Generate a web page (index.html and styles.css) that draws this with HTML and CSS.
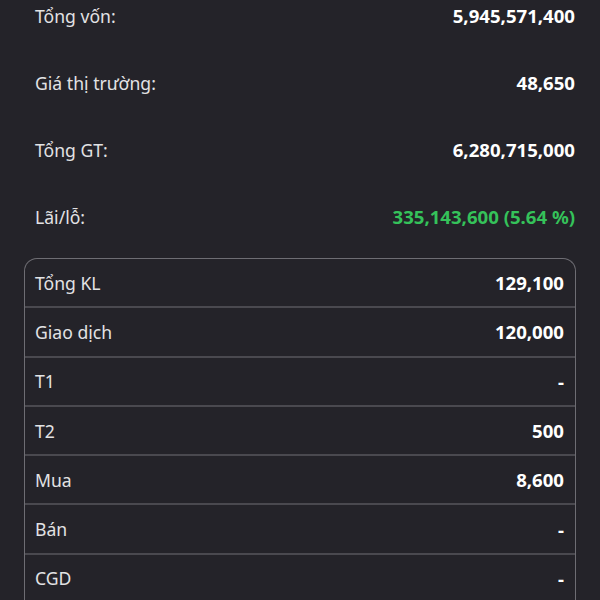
FILE: index.html
```html
<!DOCTYPE html>
<html lang="vi">
<head>
<meta charset="utf-8">
<title>Tài sản</title>
<link rel="stylesheet" href="styles.css">
</head>
<body>
<div class="page">
  <div class="summary">
    <div class="srow"><span class="label">Tổng vốn:</span><span class="value">5,945,571,400</span></div>
    <div class="srow"><span class="label">Giá thị trường:</span><span class="value">48,650</span></div>
    <div class="srow"><span class="label">Tổng GT:</span><span class="value">6,280,715,000</span></div>
    <div class="srow"><span class="label">Lãi/lỗ:</span><span class="value up">335,143,600 (5.64 %)</span></div>
  </div>
  <div class="table">
    <div class="trow"><span class="label">Tổng KL</span><span class="value">129,100</span></div>
    <div class="trow"><span class="label">Giao dịch</span><span class="value">120,000</span></div>
    <div class="trow"><span class="label">T1</span><span class="value">-</span></div>
    <div class="trow"><span class="label">T2</span><span class="value">500</span></div>
    <div class="trow"><span class="label">Mua</span><span class="value">8,600</span></div>
    <div class="trow"><span class="label">Bán</span><span class="value">-</span></div>
    <div class="trow"><span class="label">CGD</span><span class="value">-</span></div>
  </div>
</div>
</body>
</html>
```
FILE: styles.css
```css
html, body {
  margin: 0;
  padding: 0;
  background: #242329;
  height: 600px;
  overflow: hidden;
}
body {
  font-family: "Noto Sans", "Open Sans", sans-serif;
  font-size: 17.6px;
  color: #e4e4e6;
}
.page {
  padding: 0 24px;
}
.summary {
  margin-top: -18px;
  padding: 0 1px 0 11px;
}
.srow {
  height: 67px;
  display: flex;
  align-items: center;
  justify-content: space-between;
}
.label {
  color: #e2e2e4;
}
.value {
  font-weight: 700;
  font-size: 18.6px;
  color: #ffffff;
}
.value.up {
  color: #35c25a;
}
.table {
  margin-top: 8px;
  border: 1.5px solid #6e6d73;
  border-bottom: none;
  border-radius: 13px 13px 0 0;
}
.trow {
  height: 47.3px;
  border-bottom: 2px solid #4a494f;
  display: flex;
  align-items: center;
  justify-content: space-between;
  padding: 0 11px 0 10px;
}
```
